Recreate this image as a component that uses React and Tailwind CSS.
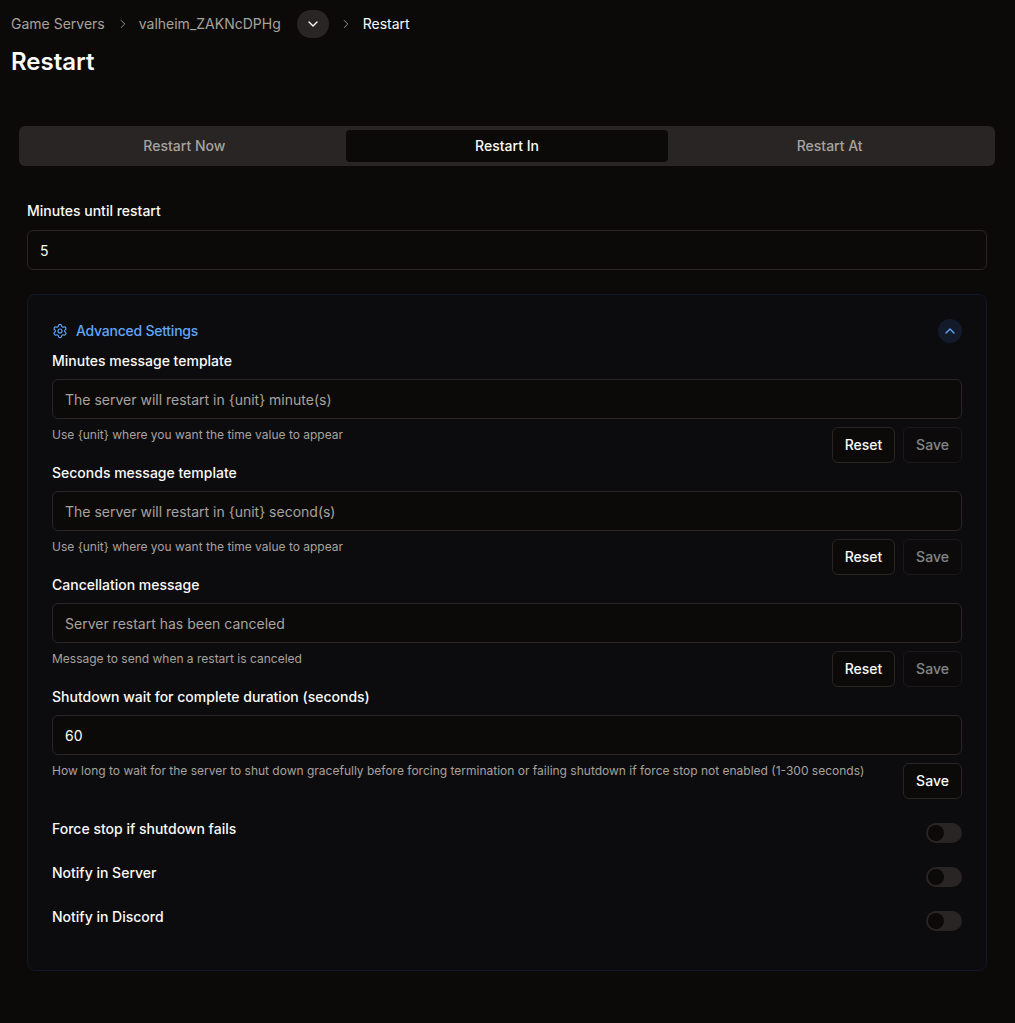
import { ChevronDown, ChevronRight, ChevronUp, Settings } from "lucide-react";

const inputClass =
  "w-full h-10 rounded-md border border-[#292524] bg-[#0c0a09] px-3 pt-px text-sm outline-none flex items-center";

const Toggle = () => (
  <div className="flex h-5 w-9 items-center rounded-full border-2 border-[#292524] bg-[#292524]">
    <div className="h-4 w-4 rounded-full bg-[#0c0a09]" />
  </div>
);

const TemplateField = ({ label, value, help }) => (
  <div>
    <label className="block h-[18px] text-sm leading-[18px] font-medium text-[#fafaf9]">
      {label}
    </label>
    <div className={`mt-[9px] ${inputClass} text-[#a8a29e]`}>{value}</div>
    <div className="mt-2 flex justify-between">
      <p className="text-xs leading-[16px] text-[#a8a29e]">{help}</p>
      <div className="flex h-9 gap-2">
        <button className="h-9 w-[63px] rounded-md border border-[#292524] bg-[#0c0a09] text-sm font-medium text-[#fafaf9]">
          Reset
        </button>
        <button className="h-9 w-[59px] rounded-md border border-[#292524] bg-[#0c0a09] text-sm font-medium text-[#fafaf9] opacity-50">
          Save
        </button>
      </div>
    </div>
  </div>
);

const ToggleRow = ({ label }) => (
  <div className="flex h-5 items-start justify-between">
    <span className="text-sm leading-[12px] font-medium text-[#fafaf9]">{label}</span>
    <Toggle />
  </div>
);

const App = () => {
  return (
    <div className="min-h-[1023px] bg-[#0c0a09] font-['Inter',sans-serif] text-[#fafaf9]">
      {/* Breadcrumbs */}
      <div className="flex h-[48px] items-center pl-[11px] text-sm">
        <span className="text-[#a8a29e]">Game Servers</span>
        <ChevronRight size={14} strokeWidth={1.5} className="mr-[9px] ml-[11px] text-[#a8a29e]" />
        <span className="text-[#a8a29e]">valheim_ZAKNcDPHg</span>
        <span className="ml-4 flex h-7 w-8 items-center justify-center rounded-full bg-[#292524]">
          <ChevronDown size={16} strokeWidth={2} />
        </span>
        <ChevronRight size={14} strokeWidth={1.5} className="mx-[10px] text-[#a8a29e]" />
        <span>Restart</span>
      </div>
      <h1 className="pt-px pl-[11px] text-2xl leading-[26px] font-semibold">Restart</h1>

      {/* Tabs */}
      <div className="mt-[51px] ml-[19px] grid h-10 w-[976px] grid-cols-3 rounded-md bg-[#292524] p-1 text-sm font-medium">
        <div className="flex items-center justify-center text-[#a8a29e]">Restart Now</div>
        <div className="flex items-center justify-center rounded-sm bg-[#0c0a09] text-[#fafaf9]">
          Restart In
        </div>
        <div className="flex items-center justify-center text-[#a8a29e]">Restart At</div>
      </div>

      <div className="mx-[28px] mt-[36px] w-[960px] -translate-x-px">
        <label className="block h-[18px] text-sm leading-[18px] font-medium">
          Minutes until restart
        </label>
        <div className={`mt-[10px] ${inputClass} text-[#fafaf9]`}>5</div>

        {/* Advanced settings card */}
        <div className="mt-6 h-[677px] rounded-lg border border-[#111827] bg-[#0c0c0e] px-6 pt-6">
          <div className="flex h-6 items-center justify-between">
            <div className="flex items-center gap-2 text-sm font-medium text-[#60a5fa]">
              <Settings size={16} strokeWidth={1.75} />
              <span className="tracking-[-0.24px]">Advanced Settings</span>
            </div>
            <span className="flex h-6 w-6 items-center justify-center rounded-full bg-[#131b2b] text-[#60a5fa]">
              <ChevronUp size={16} strokeWidth={2} />
            </span>
          </div>

          <div className="mt-[9px] flex flex-col gap-[1px]">
            <TemplateField
              label="Minutes message template"
              value="The server will restart in {unit} minute(s)"
              help="Use {unit} where you want the time value to appear"
            />
            <TemplateField
              label="Seconds message template"
              value="The server will restart in {unit} second(s)"
              help="Use {unit} where you want the time value to appear"
            />
            <TemplateField
              label="Cancellation message"
              value="Server restart has been canceled"
              help="Message to send when a restart is canceled"
            />
            <div>
              <label className="block h-[18px] text-sm leading-[18px] font-medium text-[#fafaf9]">
                Shutdown wait for complete duration (seconds)
              </label>
              <div className={`mt-[9px] ${inputClass} text-[#fafaf9]`}>60</div>
              <div className="mt-2 flex justify-between">
                <p className="text-xs leading-[16px] text-[#a8a29e]">
                  How long to wait for the server to shut down gracefully before forcing
                  termination or failing shutdown if force stop not enabled (1-300 seconds)
                </p>
                <button className="h-9 w-[59px] rounded-md border border-[#292524] bg-[#0c0a09] text-sm font-medium text-[#fafaf9]">
                  Save
                </button>
              </div>
            </div>
          </div>

          <div className="mt-6 flex flex-col gap-6">
            <ToggleRow label="Force stop if shutdown fails" />
            <ToggleRow label="Notify in Server" />
            <ToggleRow label="Notify in Discord" />
          </div>
        </div>
      </div>
    </div>
  );
};

export default App;
